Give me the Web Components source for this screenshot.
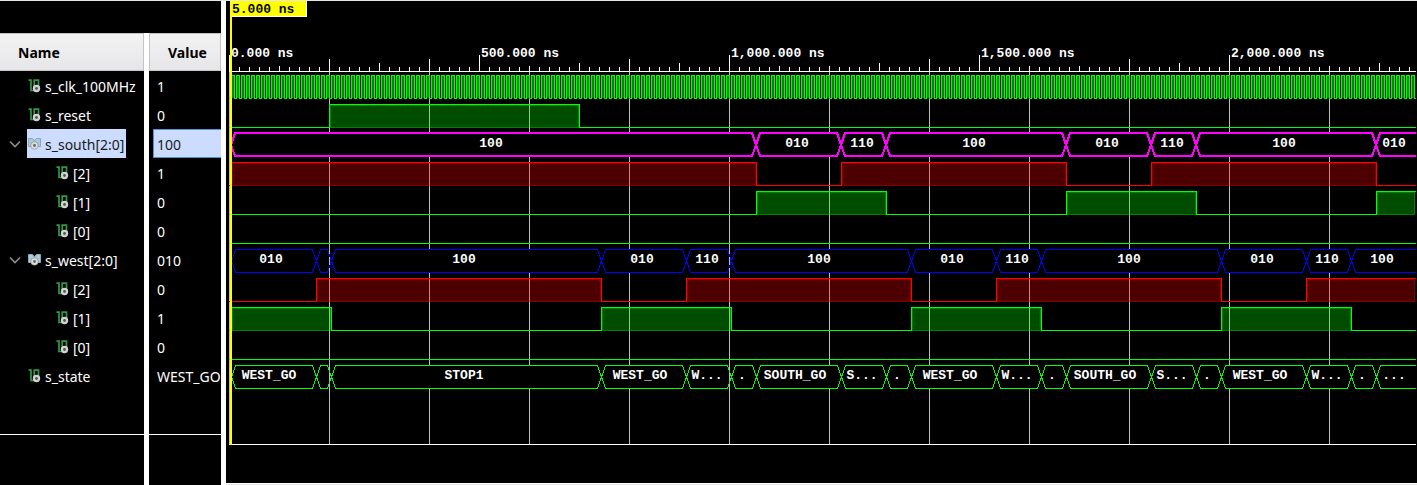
<!DOCTYPE html>
<html lang="en">
<head>
<meta charset="utf-8">
<title>Waveform viewer</title>
<style>
  html, body { margin: 0; background: #000; }
  body { min-height: 100vh; display: flex; }
</style>
</head>
<body>
<wave-viewer></wave-viewer>

<script>
const ROW = 29;          // height of one signal row
const PX_PER_NS = 0.5;   // horizontal scale
const LIME = '#00ff00', RED = '#ff0000', BLUE = '#0000ff', MAGENTA = '#ff00ff';
const toX = ns => Math.floor(ns * PX_PER_NS);

const SIGNALS = [
  { name: 's_clk_100MHz', value: '1', kind: 'clock' },
  { name: 's_reset', value: '0', kind: 'bit', color: LIME, high: [[200, 700]] },
  { name: 's_south[2:0]', value: '100', kind: 'bus', color: MAGENTA, weight: 2, selected: true,
    segments: [[5, '100'], [1055, '010'], [1225, '110'], [1315, '100'], [1675, '010'], [1845, '110'], [1935, '100'], [2295, '010']] },
  { name: '[2]', value: '1', kind: 'bit', child: true, color: RED, high: [[5, 1055], [1225, 1675], [1845, 2295]] },
  { name: '[1]', value: '0', kind: 'bit', child: true, color: LIME, high: [[1055, 1315], [1675, 1935], [2295, Infinity]] },
  { name: '[0]', value: '0', kind: 'bit', child: true, color: LIME, high: [] },
  { name: 's_west[2:0]', value: '010', kind: 'bus', color: BLUE, weight: 1,
    segments: [[5, '010'], [175, ''], [205, '100'], [745, '010'], [915, '110'], [1005, '100'], [1365, '010'], [1535, '110'], [1625, '100'], [1985, '010'], [2155, '110'], [2245, '100']] },
  { name: '[2]', value: '0', kind: 'bit', child: true, color: RED, high: [[175, 745], [915, 1365], [1535, 1985], [2155, Infinity]] },
  { name: '[1]', value: '1', kind: 'bit', child: true, color: LIME, high: [[5, 205], [745, 1005], [1365, 1625], [1985, 2245]] },
  { name: '[0]', value: '0', kind: 'bit', child: true, color: LIME, high: [] },
  { name: 's_state', value: 'WEST_GO', kind: 'bus', color: LIME, weight: 1, icon: 'bit',
    segments: [[5, 'WEST_GO'], [175, ''], [205, 'STOP1'], [745, 'WEST_GO'], [915, 'W...'], [1005, '.'], [1055, 'SOUTH_GO'], [1225, 'S...'], [1315, '.'],
      [1365, 'WEST_GO'], [1535, 'W...'], [1625, '.'], [1675, 'SOUTH_GO'], [1845, 'S...'], [1935, '.'], [1985, 'WEST_GO'], [2155, 'W...'], [2245, '.'], [2295, '...']] },
];

class SignalIcon extends HTMLElement {
  connectedCallback() {
    const bit = `<path d="M.5 1.2H3V11.5H6.2V1.2H10.5V8" fill="none" stroke="#2f9a45" stroke-width="1.7"/>
      <circle cx="8.5" cy="9.5" r="3.7" fill="#d2d2d2"/><circle cx="8.5" cy="9.5" r="1.4" fill="#555"/>`;
    const bus = `<path d="M.5 1.5H4.5L6.5 4L8.5 1.5H12.5V9.5H.5Z" fill="#a5cbdc" stroke="#88aaba"/>
      <circle cx="6.5" cy="8.5" r="3.8" fill="#dcdcdc" stroke="#777" stroke-width=".5"/><circle cx="6.5" cy="8.5" r="1.4" fill="#666"/>`;
    this.attachShadow({ mode: 'open' }).innerHTML = `
      <style>:host { display: block; flex: none; width: 13px; height: 14px; } svg { display: block; }</style>
      <svg width="13" height="14" viewBox="0 0 13 14" aria-hidden="true">${this.getAttribute('type') === 'bus' ? bus : bit}</svg>`;
  }
}
customElements.define('signal-icon', SignalIcon);

class ColumnHeader extends HTMLElement {
  connectedCallback() {
    this.attachShadow({ mode: 'open' }).innerHTML = `
      <style>
        :host { display: flex; align-items: center; box-sizing: border-box; height: 38px; padding: 0 18px;
          border: 1px solid #c4c4c4; background: linear-gradient(#f3f3f4, #e6e6e8);
          color: #000; font: bold 14px "Noto Sans", "Open Sans", sans-serif; }
        :host([flush]) { border-left: 0; }
      </style><slot></slot>`;
  }
}
customElements.define('column-header', ColumnHeader);

class SignalName extends HTMLElement {
  connectedCallback() {
    const group = this.hasAttribute('group');
    this.attachShadow({ mode: 'open' }).innerHTML = `
      <style>
        :host { display: flex; height: ${ROW}px; padding-left: 5px; color: #fff; font-size: 14px; line-height: 31px; white-space: nowrap; }
        :host([child]) { padding-left: 33px; }
        button, i { flex: none; width: 20px; height: ${ROW}px; margin: 0 2px 0 0; padding: 0; border: 0; background: none; }
        button svg { display: block; margin: 0 auto; }
        .tag { display: flex; gap: 4px; height: ${ROW}px; padding: 0 2px 0 1px; }
        signal-icon { margin-top: 8px; }
        :host([selected]) .tag { background: #cbdcff; color: #1a1a1a; }
      </style>
      ${group ? `<button type="button" aria-expanded="true" aria-label="Collapse"><svg width="12" height="8" viewBox="0 0 12 8"><path d="M1 1.5L6 6.5L11 1.5" fill="none" stroke="#8c8c8c" stroke-width="1.6"/></svg></button>` : '<i></i>'}
      <span class="tag"><signal-icon type="${this.getAttribute('icon')}"></signal-icon><slot></slot></span>`;
  }
}
customElements.define('signal-name', SignalName);

class SignalValue extends HTMLElement {
  connectedCallback() {
    this.attachShadow({ mode: 'open' }).innerHTML = `
      <style>
        :host { display: block; box-sizing: border-box; height: ${ROW}px; margin-left: 4px; padding-left: 4px;
          color: #fff; font-size: 14px; line-height: 31px; white-space: nowrap; overflow: hidden; }
        :host([selected]) { padding-left: 3px; border: 1px solid #4f94cf; border-right: 0; background: #cbdcff; color: #1a1a1a; line-height: 29px; }
      </style><slot></slot>`;
  }
}
customElements.define('signal-value', SignalValue);

class SignalPane extends HTMLElement {
  connectedCallback() {
    this.attachShadow({ mode: 'open' }).innerHTML = `
      <style>
        :host { display: block; min-width: 0; overflow: hidden; padding-top: 32px; font-family: "Noto Sans", "Open Sans", sans-serif; }
        .rows { padding-bottom: 44px; border-bottom: 1px solid #fff; }
      </style>
      <slot name="header"></slot><div class="rows"><slot></slot></div>`;
  }
}
customElements.define('signal-pane', SignalPane);

/* Base of everything drawn along the time axis; redraws when its width changes. */
class TimeTrack extends HTMLElement {
  connectedCallback() {
    this.attachShadow({ mode: 'open' }).innerHTML = `
      <style>
        :host { display: block; height: ${this.trackHeight}px; overflow: hidden; }
        svg { display: block; width: 100%; height: 100%; }
        path, rect { shape-rendering: crispEdges; }
        text { fill: #fff; font: bold 13px "Liberation Mono", monospace; white-space: pre; }
      </style><svg></svg>`;
    this.draw();
    new ResizeObserver(() => this.draw()).observe(this);
  }
  draw() {
    const width = this.clientWidth;
    if (width) this.shadowRoot.querySelector('svg').innerHTML = this.render(width);
  }
}

class TimeRuler extends TimeTrack {
  get trackHeight() { return 70; }
  render(width) {
    let ticks = '', labels = '';
    for (let x = 0; x < width; x += 10) {
      const top = x % 250 === 0 ? 54 : x % 100 === 0 ? 58 : x % 50 === 0 ? 62 : 66;
      ticks += `M${x + .5} ${top}V70`;
      if (x % 250 === 0) {
        const label = (x / PX_PER_NS).toLocaleString('en-US', { minimumFractionDigits: 3 }) + ' ns';
        labels += `<rect x="${x + 1}" y="44" width="${label.length * 8 + 4}" height="21" fill="#000"/><text x="${x + 2}" y="56">${label}</text>`;
      }
    }
    return `<path d="${ticks}" stroke="#fff"/>${labels}`;
  }
}
customElements.define('time-ruler', TimeRuler);

class WaveTrack extends TimeTrack {
  get trackHeight() { return ROW; }
  render(width) {
    const signal = SIGNALS[this.getAttribute('index')];
    return this[signal.kind](signal, width);
  }
  clock(signal, width) {
    let line = 'M0 27.5H2.5', fill = '';
    for (let x = 2; x < width; x += 5) {
      line += `V4.5H${x + 3.5}V27.5H${x + 5.5}`;
      fill += `M${x + 1} 5h2v22h-2z`;
    }
    return `<path d="${fill}" fill="#008c00"/><path d="${line}" fill="none" stroke="${LIME}"/>`;
  }
  bit(signal, width) {
    let line = 'M0 27.5', fills = '';
    for (const [from, to] of signal.high) {
      const a = toX(from), b = Math.min(toX(to), width - 1);
      if (a >= width) break;
      line += `H${a + .5}V4.5`;
      line += toX(to) < width ? `H${b + .5}V27.5` : `H${width}`;
      fills += `<rect x="${a + 1}" y="5" width="${b - a - 1}" height="23" fill="${signal.color}" fill-opacity=".3"/>
        <rect x="${a + 1.5}" y="5.5" width="${b - a - 2}" height="22" fill="none" stroke="${signal.color}" stroke-opacity=".3"/>`;
    }
    if (!line.endsWith(`H${width}`)) line += `H${width}`;
    return `${fills}<path d="${line}" fill="none" stroke="${signal.color}"/>`;
  }
  bus(signal, width) {
    const o = signal.weight === 2 ? 0 : .5, top = 4 + o, bottom = 27 + o;
    let masks = '', line = '', labels = '';
    signal.segments.forEach(([from, label], i) => {
      const next = signal.segments[i + 1], a = toX(from), b = next ? toX(next[0]) : Infinity;
      if (a >= width) return;
      const open = b >= width, end = open ? width : b - 4;
      masks += `<rect x="${a + 4}" y="4" width="${end - a - 4}" height="24" fill="#000"/>`;
      line += open
        ? `M${width} ${top}H${a + 4 + o}L${a + o} 16L${a + 4 + o} ${bottom}H${width}`
        : `M${a + o} 16L${a + 4 + o} ${top}H${b - 4 + o}L${b + o} 16L${b - 4 + o} ${bottom}H${a + 4 + o}Z`;
      // long names lean a little to the left of the segment's middle
      const lean = label.length > 5 ? 4 : 2;
      if (label) labels += `<text x="${Math.round(((i ? a : 0) + Math.min(b, width)) / 2) - lean}" y="18" text-anchor="middle">${label}</text>`;
    });
    return `${masks}<path d="${line}" fill="none" stroke="${signal.color}" stroke-width="${signal.weight}"/>${labels}`;
  }
}
customElements.define('wave-track', WaveTrack);

class TimeCursor extends HTMLElement {
  connectedCallback() {
    this.attachShadow({ mode: 'open' }).innerHTML = `
      <style>
        :host { display: block; position: absolute; top: 0; bottom: 0; left: 4px; border-left: 2px solid #ff0; pointer-events: none; }
        span { display: block; box-sizing: border-box; width: 75px; height: 16px; background: #ff0; color: #000;
          border: solid #fff; border-width: 0 1px 1px 0; font: bold 13px/18px "Liberation Mono", monospace; white-space: nowrap; }
      </style><span><slot></slot></span>`;
  }
}
customElements.define('time-cursor', TimeCursor);

class WavePane extends HTMLElement {
  connectedCallback() {
    this.attachShadow({ mode: 'open' }).innerHTML = `
      <style>
        :host { display: block; min-width: 0; box-sizing: border-box; padding: 0 1px 0 0; border-bottom: 1px solid #e6e6e6; box-shadow: inset 0 -1px #fff; }
        .chart { position: relative; padding-left: 3px; }
        .tracks { padding-bottom: 54px; border-bottom: 1px solid #fff; box-shadow: inset 0 1px #fff;
          background: repeating-linear-gradient(to right, #bdbdbd 0 1px, transparent 1px 100px); }
      </style>
      <div class="chart">
        <time-ruler></time-ruler>
        <div class="tracks">${SIGNALS.map((s, i) => `<wave-track index="${i}"></wave-track>`).join('')}</div>
        <time-cursor>5.000 ns</time-cursor>
      </div>`;
  }
}
customElements.define('wave-pane', WavePane);

class WaveViewer extends HTMLElement {
  connectedCallback() {
    const names = SIGNALS.map(s => {
      const icon = s.icon || (s.kind === 'bus' ? 'bus' : 'bit');
      return `<signal-name icon="${icon}" ${icon === 'bus' ? 'group' : ''} ${s.child ? 'child' : ''} ${s.selected ? 'selected' : ''}>${s.name}</signal-name>`;
    }).join('');
    const values = SIGNALS.map(s => `<signal-value ${s.selected ? 'selected' : ''}>${s.value}</signal-value>`).join('');
    this.attachShadow({ mode: 'open' }).innerHTML = `
      <style>
        :host { flex: 1; min-width: 0; display: grid; grid-template-columns: 144px 5px 72px 5px minmax(0, 1fr);
          border-top: 1px solid #e6e6e6; background: #000; }
        .splitter { background: #fff; }
        .short { margin-top: 32px; }
      </style>
      <signal-pane><column-header slot="header" flush>Name</column-header>${names}</signal-pane>
      <div class="splitter short"></div>
      <signal-pane><column-header slot="header">Value</column-header>${values}</signal-pane>
      <div class="splitter"></div>
      <wave-pane></wave-pane>`;
  }
}
customElements.define('wave-viewer', WaveViewer);
</script>
</body>
</html>
